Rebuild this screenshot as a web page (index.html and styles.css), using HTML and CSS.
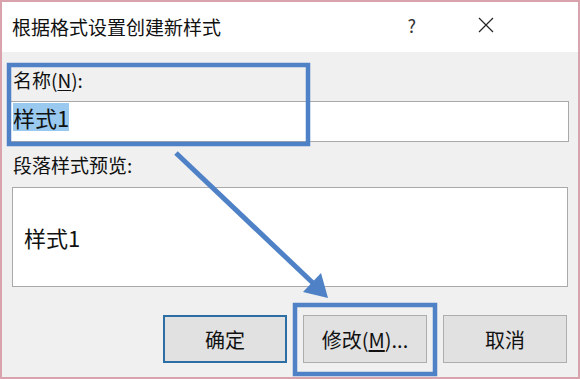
FILE: index.html
```html
<!DOCTYPE html>
<html lang="zh-CN">
<head>
    <meta charset="UTF-8">
    <title>根据格式设置创建新样式</title>
    <link rel="stylesheet" href="styles.css">
</head>
<body>
    <div class="window">
        <!-- Title bar -->
        <div class="titlebar">
            <span class="title">根据格式设置创建新样式</span>
            <span class="help">?</span>
            <svg class="close" width="16" height="16" viewBox="0 0 16 16">
                <path d="M1 1 L15 15 M15 1 L1 15" stroke="#222" stroke-width="1.2" fill="none"/>
            </svg>
        </div>

        <div class="content">
            <div class="label">名称(<u>N</u>):</div>
            <div class="name-box"><span class="sel">样式1</span></div>

            <div class="label label-preview">段落样式预览:</div>
            <div class="preview">样式1</div>

            <div class="buttons">
                <button class="btn btn-default">确定</button>
                <button class="btn">修改(<u>M</u>)...</button>
                <button class="btn">取消</button>
            </div>
        </div>

        <!-- Annotation overlay -->
        <svg class="annotations" width="580" height="379" viewBox="0 0 580 379">
            <rect x="9" y="65" width="299" height="79" fill="none" stroke="#4f81c6" stroke-width="4.5"/>
            <rect x="295" y="305" width="140" height="69" fill="none" stroke="#4f81c6" stroke-width="4.5"/>
            <line x1="176" y1="153" x2="314" y2="284" stroke="#4f81c6" stroke-width="5"/>
            <polygon points="328,298 303,292 321,273" fill="#4f81c6"/>
        </svg>
    </div>
</body>
</html>
```

FILE: styles.css
```css
body, html {
    margin: 0;
    padding: 0;
}

body {
    font-family: "Noto Sans CJK SC", "Noto Sans", sans-serif;
    color: #111;
}

.window {
    position: relative;
    width: 580px;
    height: 379px;
    box-sizing: border-box;
    border: 2px solid #d8a3ac;
    background: #f0f0f0;
    overflow: hidden;
}

.titlebar {
    height: 50px;
    background: #fff;
    display: flex;
    align-items: center;
    padding-left: 10px;
}

.title {
    font-size: 19px;
    flex: 1;
    margin-top: -2px;
}

.help {
    font-size: 18px;
    color: #333;
    margin-right: 62px;
    margin-top: -4px;
}

.close {
    margin-right: 84px;
    margin-top: -4px;
}

.content {
    padding: 0 9px 0 8px;
}

.label {
    font-size: 19px;
    line-height: 26px;
    height: 26px;
    margin-top: 15px;
    padding-left: 3px;
}

.label u {
    text-underline-offset: 2px;
}

.name-box {
    margin-top: 8px;
    height: 39px;
    background: #fff;
    border: 1px solid #a9a9a9;
    padding-left: 2px;
    font-size: 22px;
    line-height: 28px;
}

.sel {
    background: #99c9ef;
    display: inline-block;
    margin-top: 1px;
}

.label-preview {
    margin-top: 10px;
}

.preview {
    margin: 9px 1px 0 2px;
    height: 98px;
    background: #fff;
    border: 1px solid #a9a9a9;
    font-size: 22px;
    line-height: 98px;
    padding-left: 11px;
}

.buttons {
    display: flex;
    justify-content: flex-end;
    gap: 16px;
    margin-top: 28px;
    margin-right: 2px;
}

.btn {
    width: 124px;
    height: 48px;
    font-family: "Noto Sans CJK SC", "Noto Sans", sans-serif;
    font-size: 20px;
    color: #111;
    background: #e1e1e1;
    border: 1px solid #adadad;
    padding: 0;
}

.btn-default {
    border: 2px solid #2d6fa5;
}

.btn u {
    text-underline-offset: 2px;
}

.annotations {
    position: absolute;
    top: -2px;
    left: -2px;
    pointer-events: none;
}
```
